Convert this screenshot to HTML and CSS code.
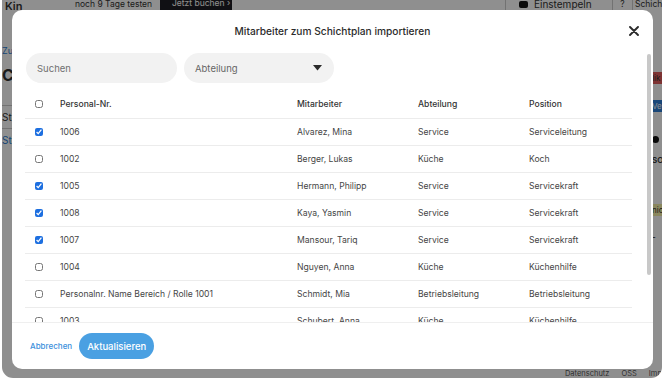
FILE: index.html
```html
<!DOCTYPE html>
<html lang="de">
<head>
    <meta charset="UTF-8">
    <meta name="viewport" content="width=device-width, initial-scale=1.0">
    <title>Mitarbeiter importieren</title>
    <link rel="stylesheet" href="styles.css">
</head>
<body>
    <div class="window">
        <div class="page">
            <header class="topbar">
                <span class="brand">Kin</span>
                <span class="trial">noch 9 Tage testen</span>
                <span class="book">Jetzt buchen &rsaquo;</span>
                <span class="spacer"></span>
                <span class="clock"><i class="clock-icon"></i>Einstempeln</span>
                <span class="help">?</span>
                <span class="user">Schichtplan</span>
            </header>
            <div class="page-main">
                <aside class="page-left">
                    <span class="back">Zurück</span>
                    <span class="big">Calendar</span>
                    <span class="row dark">Start</span>
                    <span class="row link">Status</span>
                </aside>
                <section class="page-center"></section>
                <aside class="page-right">
                    <span class="tag red">lik</span>
                    <span class="tag blue">Ve</span>
                    <span class="dot"></span>
                    <span class="plain">SO</span>
                    <span class="tag yellow">nic</span>
                    <span class="plain">-</span>
                </aside>
            </div>
            <footer class="page-foot">
                <span>Datenschutz</span>
                <span>OSS</span>
                <span>Imp</span>
            </footer>
        </div>

        <div class="overlay"></div>

        <div class="modal">
            <div class="modal-head">
                <h2>Mitarbeiter zum Schichtplan importieren</h2>
                <button class="close" type="button" aria-label="Schließen">
                    <svg width="10" height="10" viewBox="0 0 10 10"><path d="M1 1L9 9M9 1L1 9" stroke="#2b2b2b" stroke-width="1.9" stroke-linecap="round"/></svg>
                </button>
            </div>
            <div class="modal-body">
                <div class="filters">
                    <input class="search" type="text" placeholder="Suchen">
                    <div class="select">
                        <span>Abteilung</span>
                        <svg width="9" height="6" viewBox="0 0 9 6"><path d="M0 0H9L4.5 5.5Z" fill="#2b2b2b"/></svg>
                    </div>
                </div>
                <table class="staff">
                    <colgroup>
                        <col class="c-check">
                        <col class="c-nr">
                        <col class="c-name">
                        <col class="c-dept">
                        <col>
                    </colgroup>
                    <thead>
                        <tr>
                            <th><input type="checkbox"></th>
                            <th>Personal-Nr.</th>
                            <th>Mitarbeiter</th>
                            <th>Abteilung</th>
                            <th>Position</th>
                        </tr>
                    </thead>
                    <tbody>
                        <tr><td><input type="checkbox" checked></td><td>1006</td><td>Alvarez, Mina</td><td>Service</td><td>Serviceleitung</td></tr>
                        <tr><td><input type="checkbox"></td><td>1002</td><td>Berger, Lukas</td><td>Küche</td><td>Koch</td></tr>
                        <tr><td><input type="checkbox" checked></td><td>1005</td><td>Hermann, Philipp</td><td>Service</td><td>Servicekraft</td></tr>
                        <tr><td><input type="checkbox" checked></td><td>1008</td><td>Kaya, Yasmin</td><td>Service</td><td>Servicekraft</td></tr>
                        <tr><td><input type="checkbox" checked></td><td>1007</td><td>Mansour, Tariq</td><td>Service</td><td>Servicekraft</td></tr>
                        <tr><td><input type="checkbox"></td><td>1004</td><td>Nguyen, Anna</td><td>Küche</td><td>Küchenhilfe</td></tr>
                        <tr><td><input type="checkbox"></td><td>Personalnr. Name Bereich / Rolle 1001</td><td>Schmidt, Mia</td><td>Betriebsleitung</td><td>Betriebsleitung</td></tr>
                        <tr><td><input type="checkbox"></td><td>1003</td><td>Schubert, Anna</td><td>Küche</td><td>Küchenhilfe</td></tr>
                        <tr><td><input type="checkbox"></td><td>1009</td><td>Vogel, Lena</td><td>Bar</td><td>Barkeeperin</td></tr>
                        <tr><td><input type="checkbox"></td><td>1010</td><td>Wagner, Tim</td><td>Service</td><td>Aushilfe</td></tr>
                    </tbody>
                </table>
            </div>
            <div class="scroll-thumb"></div>
            <div class="modal-foot">
                <a class="cancel" href="#">Abbrechen</a>
                <button class="primary" type="button">Aktualisieren</button>
            </div>
        </div>
    </div>
</body>
</html>
```

FILE: styles.css
```css
* {
    box-sizing: border-box;
}
body {
    margin: 0;
    background: #fff;
    font-family: Inter, "Noto Sans", sans-serif;
    color: #333;
}
.window {
    position: relative;
    width: 660px;
    height: 378px;
    margin-left: 2px;
    border-radius: 0 0 11px 11px;
    overflow: hidden;
    background: #fff;
}

/* page behind the dialog */
.page {
    height: 100%;
    display: flex;
    flex-direction: column;
}
.topbar {
    height: 10px;
    flex: none;
    display: flex;
    align-items: flex-end;
    overflow: hidden;
    font-size: 8.5px;
    line-height: 12px;
    white-space: nowrap;
}
.brand {
    width: 73px;
    padding-left: 3px;
    font-size: 11px;
    font-weight: 600;
    line-height: 8px;
}
.trial {
    width: 85px;
}
.book {
    width: 72px;
    height: 13px;
    padding-left: 12px;
    background: #1e1e24;
    color: #fff;
}
.spacer {
    flex: 1;
}
.clock {
    width: 107px;
    display: flex;
    align-items: center;
    gap: 6px;
    padding-left: 13px;
    border-left: 1px solid #ccc;
    font-size: 10px;
}
.clock-icon {
    width: 9px;
    height: 7px;
    background: #111;
    border-radius: 2px;
}
.help {
    width: 20px;
    border-left: 1px solid #ccc;
    text-align: center;
}
.user {
    width: 30px;
    padding-left: 2px;
    border-left: 1px solid #ccc;
    overflow: hidden;
}
.page-main {
    flex: 1;
    display: flex;
}
.page-left {
    width: 40px;
    display: flex;
    flex-direction: column;
    padding-top: 35px;
    font-size: 9px;
    white-space: nowrap;
}
.back {
    color: #2a7bd0;
    height: 20px;
}
.big {
    font-size: 16px;
    font-weight: 700;
    height: 40px;
}
.row {
    height: 23px;
    line-height: 23px;
    border-top: 1px solid #ccc;
    font-size: 10px;
}
.row.link {
    color: #2a7bd0;
}
.page-center {
    flex: 1;
}
.page-right {
    width: 10px;
    display: flex;
    flex-direction: column;
    padding-top: 62px;
    font-size: 8px;
    white-space: nowrap;
    overflow: hidden;
}
.tag {
    height: 12px;
    line-height: 12px;
    margin-bottom: 16px;
}
.tag.red {
    background: #e15b5b;
}
.tag.blue {
    background: #2f7fd6;
    color: #fff;
}
.tag.yellow {
    margin-top: 35px;
    background: #f7f1a8;
}
.dot {
    width: 7px;
    height: 7px;
    margin: 8px 0 12px;
    border-radius: 50%;
    background: #111;
}
.plain {
    height: 14px;
    font-weight: 600;
}
.page-foot {
    height: 9px;
    flex: none;
    display: flex;
    justify-content: flex-end;
    gap: 12px;
    overflow: hidden;
    font-size: 7.5px;
    line-height: 9px;
    color: #555;
}
.overlay {
    position: absolute;
    inset: 0;
    background: rgba(0, 0, 0, 0.44);
}

/* dialog */
.modal {
    position: absolute;
    left: 10px;
    top: 10px;
    width: 641px;
    height: 359px;
    display: flex;
    flex-direction: column;
    background: #fff;
    border-radius: 10px;
    overflow: hidden;
}
.modal-head {
    height: 40px;
    flex: none;
    display: grid;
    grid-template-columns: 1fr auto 1fr;
    align-items: center;
    padding: 2px 14px 0;
}
.modal-head h2 {
    grid-column: 2;
    margin: 0;
    font-size: 10.2px;
    font-weight: 500;
    color: #2b2b2b;
}
.close {
    justify-self: end;
    display: flex;
    padding: 0;
    border: none;
    background: none;
}
.modal-body {
    flex: 1;
    overflow: hidden;
    padding: 3px 21px 0 13px;
}
.scroll-thumb {
    position: absolute;
    left: 635px;
    top: 44px;
    width: 4px;
    height: 221px;
    border-radius: 2px;
    background: #c8c8c8;
}
.filters {
    display: flex;
    gap: 7px;
    margin-left: 1px;
}
.search,
.select {
    height: 30px;
    border: none;
    border-radius: 15px;
    background: #f2f2f2;
    font-family: inherit;
    font-size: 9.5px;
    color: #666;
}
.search {
    width: 151px;
    padding: 0 11px;
    outline: none;
}
.search::placeholder {
    color: #707070;
}
.select {
    width: 150px;
    display: flex;
    align-items: center;
    justify-content: space-between;
    padding: 0 12px 0 11px;
}
.staff {
    width: 100%;
    margin-top: 8px;
    border-collapse: collapse;
    table-layout: fixed;
    font-size: 8.6px;
    color: #454545;
}
.c-check {
    width: 35px;
}
.c-nr {
    width: 237px;
}
.c-name {
    width: 121px;
}
.c-dept {
    width: 111px;
}
.staff th,
.staff td {
    height: 27px;
    padding: 0;
    text-align: left;
    white-space: nowrap;
    border-bottom: 1px solid #ececec;
}
.staff th {
    font-weight: 500;
    color: #333;
}
.staff th:first-child,
.staff td:first-child {
    padding-left: 10px;
}
.staff input {
    display: block;
    width: 8px;
    height: 8px;
    margin: 0;
    accent-color: #1d6fe0;
}
.modal-foot {
    height: 47px;
    flex: none;
    display: flex;
    align-items: center;
    gap: 7px;
    padding-left: 18px;
    border-top: 1px solid #efefef;
}
.cancel {
    font-size: 8px;
    font-weight: 500;
    line-height: 10px;
    color: #3b8fdc;
    text-decoration: none;
}
.primary {
    width: 75px;
    height: 26px;
    border: none;
    border-radius: 13px;
    background: #4aa0e2;
    color: #fff;
    font-family: inherit;
    font-size: 9.5px;
    font-weight: 500;
}
```
